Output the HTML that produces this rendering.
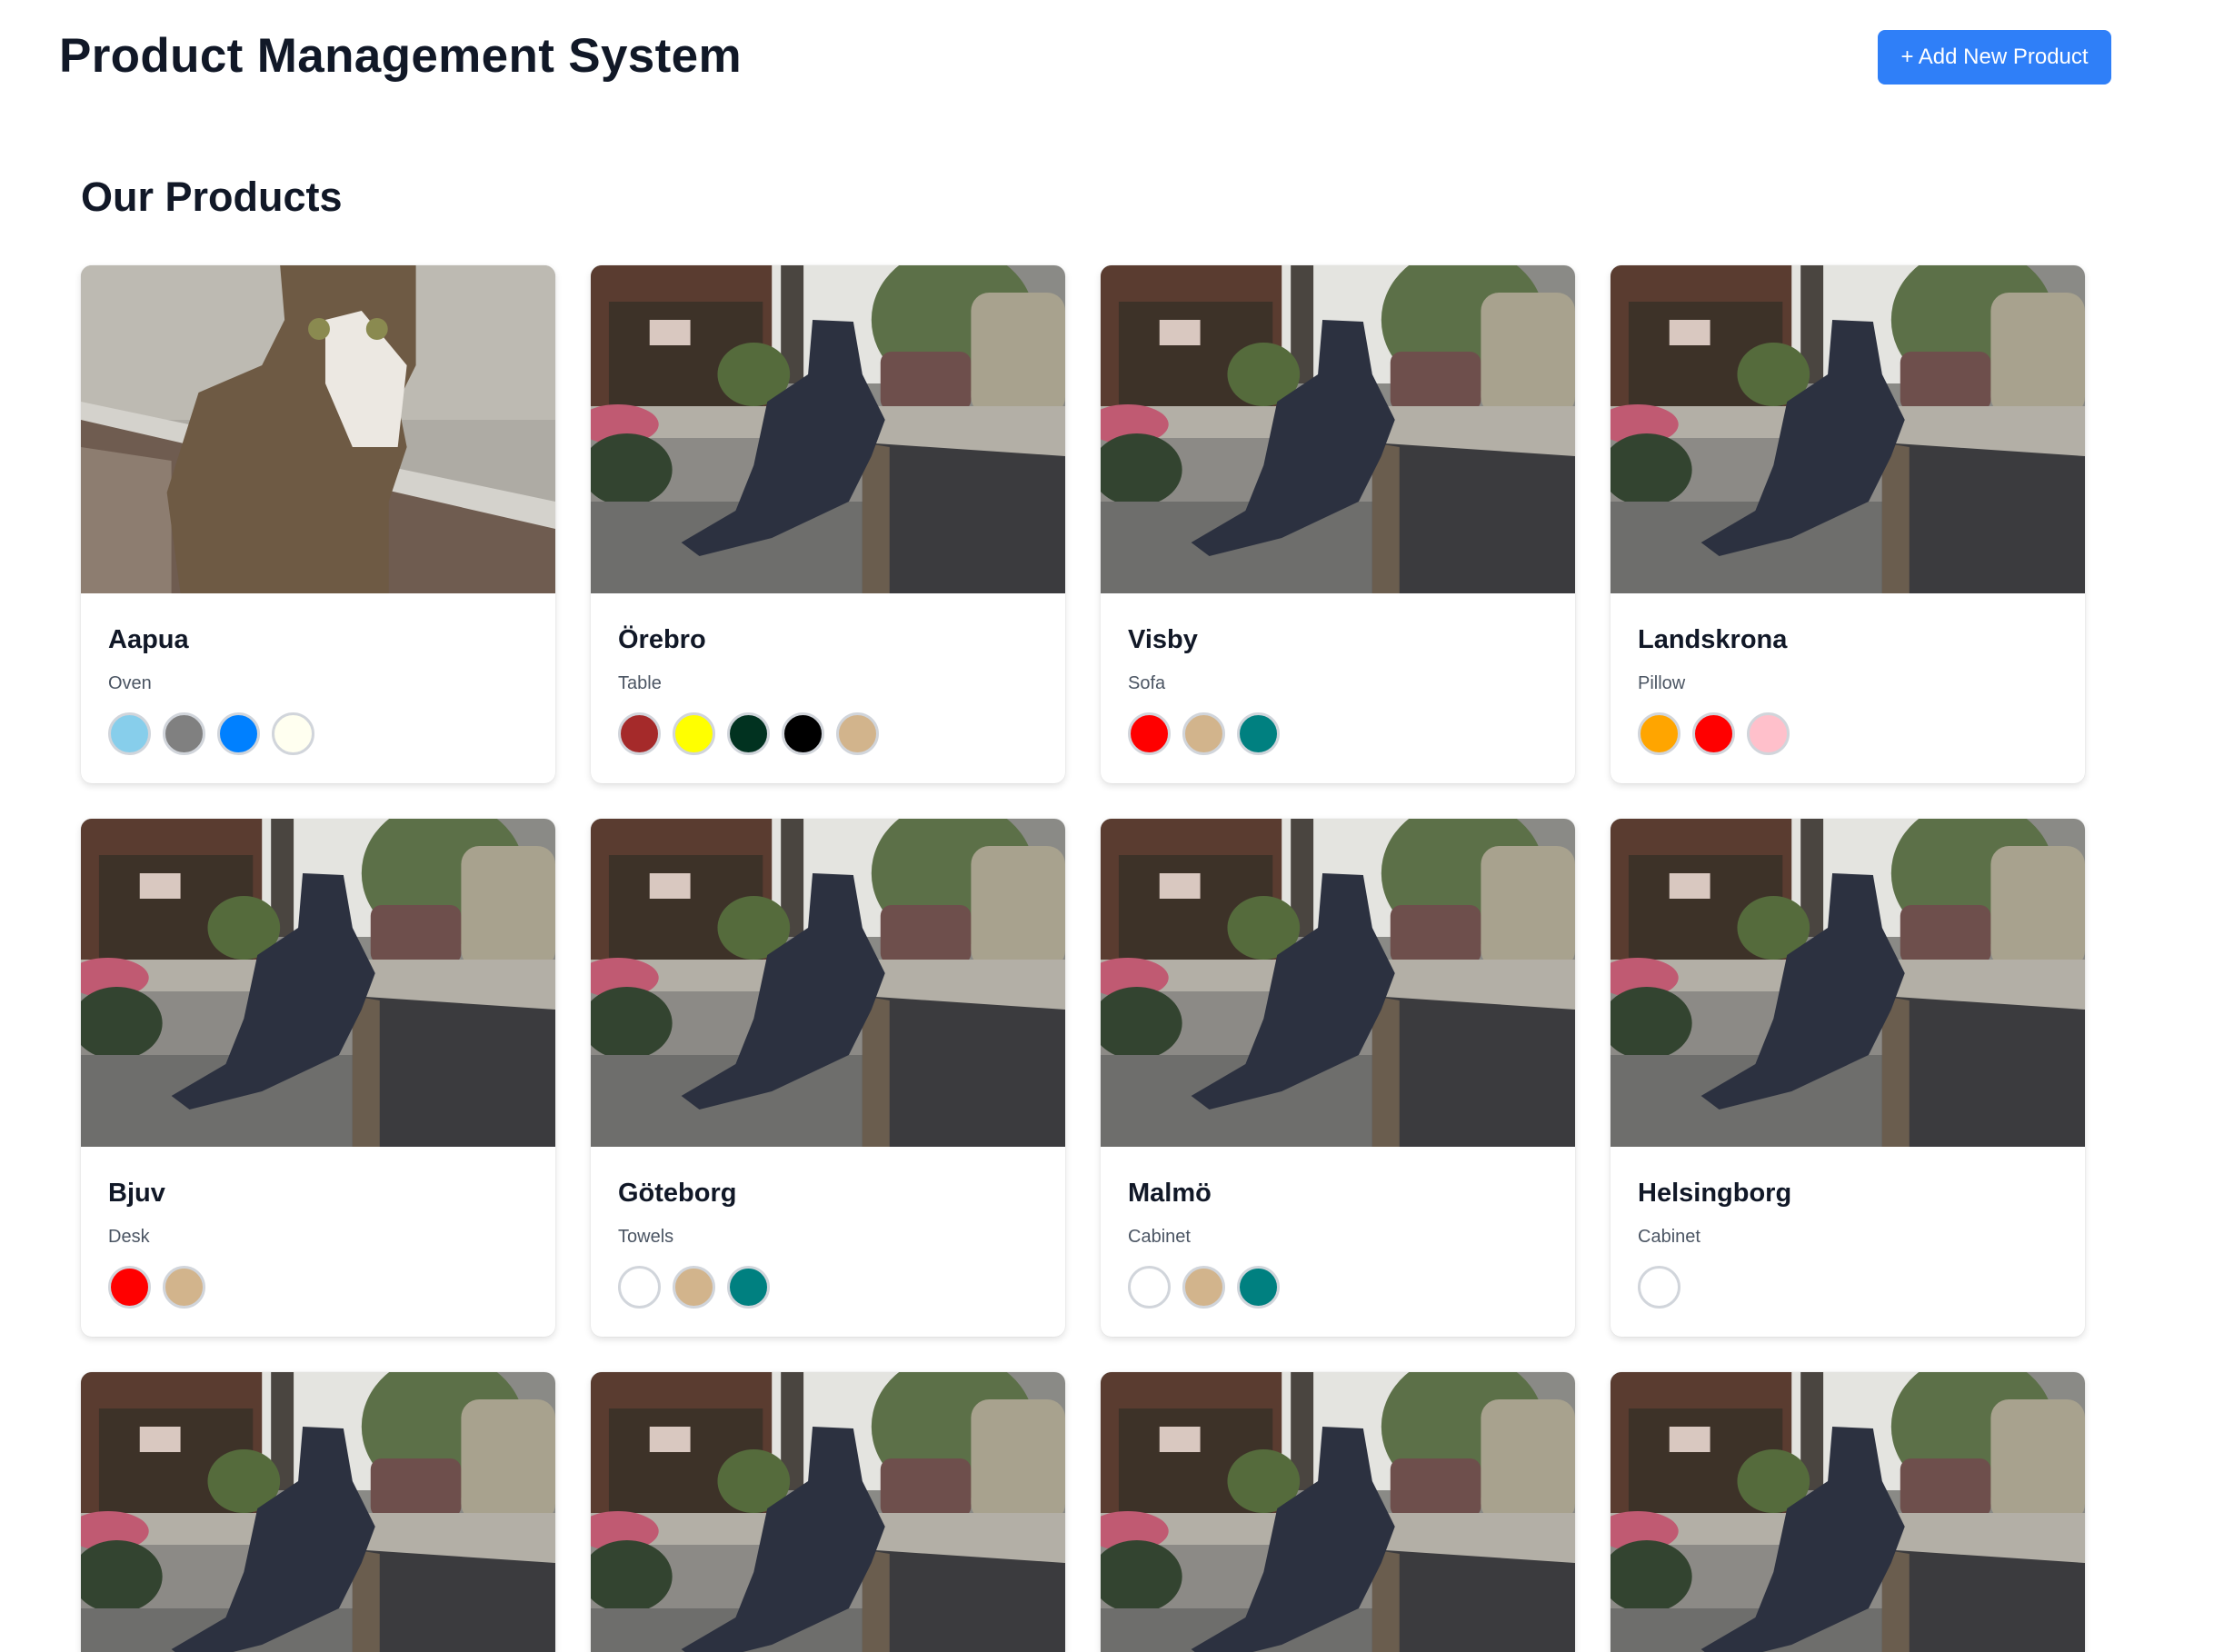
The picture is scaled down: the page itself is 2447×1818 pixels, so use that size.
<!DOCTYPE html>
<html><head><meta charset="utf-8"><style>
*{margin:0;padding:0;box-sizing:border-box}
html{height:1818px;overflow:hidden}
body{width:2447px;height:1818px;background:#fff;font-family:"Liberation Sans",Arial,sans-serif;position:relative;overflow:hidden}
#wrap{position:absolute;left:0;top:0;width:2447px;height:1818px;overflow:hidden}
h1{position:absolute;left:65px;top:31px;font-size:53px;font-weight:bold;color:#111827;letter-spacing:0.35px}
.btn{position:absolute;left:2066px;top:33px;width:257px;height:60px;background:#2f7ff8;border-radius:8px;color:#fff;font-size:24px;line-height:60px;text-align:center}
h2{position:absolute;left:89px;top:191px;font-size:45px;font-weight:bold;color:#111827}
.card{position:absolute;width:522px;height:570px;border-radius:12px;background:#fff;box-shadow:0 3px 8px rgba(0,0,0,.12),0 0 1px rgba(0,0,0,.15);overflow:hidden}
.card svg{display:block;width:522px;height:361px}
.nm{position:absolute;left:30px;font-size:29px;font-weight:bold;color:#111827}
.ct{position:absolute;left:30px;font-size:20px;color:#4b5563}
.sw{position:absolute;left:30px;display:flex;gap:13px}
.sw span{width:47px;height:47px;border-radius:50%;border:3px solid #d1d5db;display:block}
</style></head><body><div id="wrap">
<svg width="0" height="0" style="position:absolute">
<defs>
<symbol id="street" viewBox="0 0 524 361" preserveAspectRatio="none">
<rect width="524" height="361" fill="#8a8a86"/>
<rect x="190" y="0" width="180" height="130" fill="#e4e4e0"/>
<rect x="0" y="0" width="200" height="165" fill="#5a3c30"/>
<rect x="20" y="40" width="170" height="125" fill="#3d3228"/>
<rect x="65" y="60" width="45" height="28" fill="#d9c8c0"/>
<rect x="210" y="0" width="25" height="130" fill="#4a4540"/>
<ellipse cx="400" cy="60" rx="90" ry="80" fill="#5c7048"/>
<ellipse cx="180" cy="120" rx="40" ry="35" fill="#556b3c"/>
<rect x="320" y="95" width="100" height="65" rx="12" fill="#6e4f4c"/>
<rect x="420" y="30" width="104" height="135" rx="20" fill="#a8a28e"/>
<rect x="0" y="155" width="524" height="70" fill="#b3afa6"/>
<rect x="0" y="190" width="300" height="80" fill="#8c8a86"/>
<ellipse cx="30" cy="175" rx="45" ry="22" fill="#c05a72"/>
<ellipse cx="40" cy="225" rx="50" ry="40" fill="#334430"/>
<rect x="0" y="260" width="310" height="101" fill="#6e6e6c"/>
<path d="M300 195 L524 210 L524 361 L300 361 Z" fill="#3b3b3e"/>
<path d="M300 195 L330 200 L330 361 L300 361 Z" fill="#6a5d4e"/>
<path d="M245 60 L290 62 L300 120 L325 170 L310 210 L285 260 L200 300 L120 320 L100 305 L160 270 L180 220 L195 150 L240 120 Z" fill="#2c3140"/>
</symbol>
<symbol id="cat" viewBox="0 0 524 361" preserveAspectRatio="none">
<rect width="524" height="361" fill="#aeaba4"/>
<rect x="0" y="0" width="524" height="170" fill="#bdbab2"/>
<path d="M0 150 L524 260 L524 361 L0 361 Z" fill="#d4d2cc"/>
<path d="M0 170 L524 290 L524 361 L0 361 Z" fill="#6f5c50"/>
<path d="M0 200 L100 215 L100 361 L0 361 Z" fill="#8d7d70"/>
<path d="M220 0 L370 0 L370 110 L350 150 L360 200 L340 260 L340 361 L110 361 L95 250 L130 140 L200 110 L225 60 Z" fill="#6e5a44"/>
<path d="M270 60 L310 50 L360 110 L350 200 L300 200 L270 130 Z" fill="#ece8e2"/>
<circle cx="263" cy="70" r="12" fill="#8a8a50"/><circle cx="327" cy="70" r="12" fill="#8a8a50"/>
</symbol>
</defs></svg>

<h1>Product Management System</h1>
<div class="btn">+ Add New Product</div>
<h2>Our Products</h2>

<div class="card" style="left:89px;top:292px"><svg><use href="#cat"/></svg>
<div class="nm" style="top:396px">Aapua</div><div class="ct" style="top:449px">Oven</div>
<div class="sw" style="top:492px"><span style="background:#87ceeb"></span><span style="background:#808080"></span><span style="background:#0080ff"></span><span style="background:#fffff0"></span></div></div>

<div class="card" style="left:650px;top:292px"><svg><use href="#street"/></svg>
<div class="nm" style="top:396px">Örebro</div><div class="ct" style="top:449px">Table</div>
<div class="sw" style="top:492px"><span style="background:#a52a2a"></span><span style="background:#ffff00"></span><span style="background:#013220"></span><span style="background:#000"></span><span style="background:#d2b48c"></span></div></div>

<div class="card" style="left:1211px;top:292px"><svg><use href="#street"/></svg>
<div class="nm" style="top:396px">Visby</div><div class="ct" style="top:449px">Sofa</div>
<div class="sw" style="top:492px"><span style="background:#ff0000"></span><span style="background:#d2b48c"></span><span style="background:#008080"></span></div></div>

<div class="card" style="left:1772px;top:292px"><svg><use href="#street"/></svg>
<div class="nm" style="top:396px">Landskrona</div><div class="ct" style="top:449px">Pillow</div>
<div class="sw" style="top:492px"><span style="background:#ffa500"></span><span style="background:#ff0000"></span><span style="background:#ffc0cb"></span></div></div>

<div class="card" style="left:89px;top:901px"><svg><use href="#street"/></svg>
<div class="nm" style="top:396px">Bjuv</div><div class="ct" style="top:449px">Desk</div>
<div class="sw" style="top:492px"><span style="background:#ff0000"></span><span style="background:#d2b48c"></span></div></div>

<div class="card" style="left:650px;top:901px"><svg><use href="#street"/></svg>
<div class="nm" style="top:396px">Göteborg</div><div class="ct" style="top:449px">Towels</div>
<div class="sw" style="top:492px"><span style="background:#fff"></span><span style="background:#d2b48c"></span><span style="background:#008080"></span></div></div>

<div class="card" style="left:1211px;top:901px"><svg><use href="#street"/></svg>
<div class="nm" style="top:396px">Malmö</div><div class="ct" style="top:449px">Cabinet</div>
<div class="sw" style="top:492px"><span style="background:#fff"></span><span style="background:#d2b48c"></span><span style="background:#008080"></span></div></div>

<div class="card" style="left:1772px;top:901px"><svg><use href="#street"/></svg>
<div class="nm" style="top:396px">Helsingborg</div><div class="ct" style="top:449px">Cabinet</div>
<div class="sw" style="top:492px"><span style="background:#fff"></span></div></div>

<div class="card" style="left:89px;top:1510px;height:308px;border-radius:12px 12px 0 0"><svg><use href="#street"/></svg></div>
<div class="card" style="left:650px;top:1510px;height:308px;border-radius:12px 12px 0 0"><svg><use href="#street"/></svg></div>
<div class="card" style="left:1211px;top:1510px;height:308px;border-radius:12px 12px 0 0"><svg><use href="#street"/></svg></div>
<div class="card" style="left:1772px;top:1510px;height:308px;border-radius:12px 12px 0 0"><svg><use href="#street"/></svg></div>
</div></body></html>
